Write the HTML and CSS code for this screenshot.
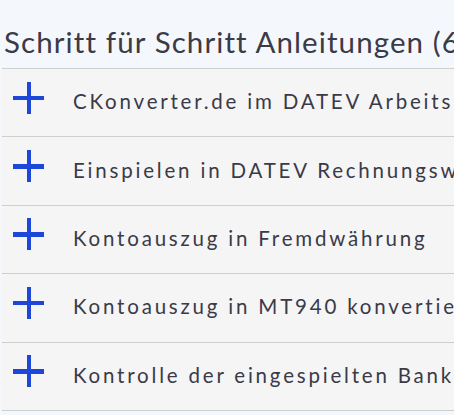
FILE: index.html
```html
<!DOCTYPE html>
<html lang="de">
<head>
<meta charset="utf-8">
<link rel="stylesheet" href="styles.css">
</head>
<body>
<section class="guides">
  <h2 class="guides-title">Schritt für Schritt Anleitungen (6)</h2>
  <ul class="acc">
    <li class="acc-row"><span class="acc-plus"></span><span class="acc-label">CKonverter.de im DATEV Arbeitsplatz einrichten</span></li>
    <li class="acc-row"><span class="acc-plus"></span><span class="acc-label">Einspielen in DATEV Rechnungswesen</span></li>
    <li class="acc-row"><span class="acc-plus"></span><span class="acc-label">Kontoauszug in Fremdwährung</span></li>
    <li class="acc-row"><span class="acc-plus"></span><span class="acc-label">Kontoauszug in MT940 konvertieren</span></li>
    <li class="acc-row"><span class="acc-plus"></span><span class="acc-label">Kontrolle der eingespielten Bankdaten</span></li>
  </ul>
</section>
</body>
</html>
```
FILE: styles.css
```css
html, body {
  margin: 0;
  padding: 0;
  background: #f4f8fc;
  overflow: hidden;
}
body {
  width: 454px;
  height: 415px;
  font-family: "Lato", "Noto Sans", sans-serif;
  color: #3a3a48;
}
.guides {
  padding: 22px 0 0 2px;
  width: 800px;
}
.guides-title {
  margin: 0;
  padding: 0 0 0 2px;
  font-size: 29.5px;
  font-weight: 400;
  letter-spacing: 1.1px;
  line-height: 40px;
  white-space: nowrap;
}
.acc {
  list-style: none;
  margin: 6px 0 0 0;
  padding: 0;
  border-top: 1px solid #cfcfcf;
  background: #f5f5f5;
}
.acc-row {
  display: flex;
  align-items: center;
  height: 67.4px;
  border-bottom: 1px solid #cfcfcf;
  white-space: nowrap;
}
.acc-plus {
  position: relative;
  width: 31px;
  height: 32px;
  margin: -10px 29px 0 11px;
  flex: none;
}
.acc-plus::before,
.acc-plus::after {
  content: "";
  position: absolute;
  background: #1c47d8;
}
.acc-plus::before {
  left: 0;
  right: 0;
  top: 14px;
  height: 4.5px;
}
.acc-plus::after {
  top: 0;
  bottom: 0;
  left: 13.5px;
  width: 4.5px;
}
.acc-label {
  font-size: 20.5px;
  letter-spacing: 2.8px;
  margin-bottom: 3px;
}
```
